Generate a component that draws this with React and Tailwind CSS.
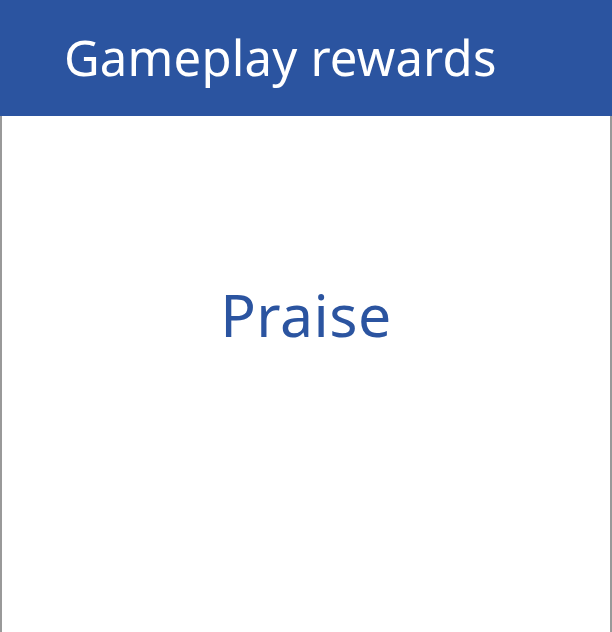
import React from 'react';

export default function App() {
  return (
    <div className="w-[612px] h-[632px] flex flex-col bg-white" style={{ fontFamily: '"Noto Sans", sans-serif' }}>
      <div className="h-[116px] bg-[#2b54a0] flex items-center pl-[64px] pb-[2px] shrink-0">
        <h1 className="text-white text-[49px] leading-none font-normal tracking-[0.2px]">Gameplay rewards</h1>
      </div>
      <div className="flex-1 border-x-2 border-[#999999] flex justify-center pt-[169px]">
        <p className="text-[#2b54a0] text-[59px] leading-none h-fit tracking-[0.5px]">Praise</p>
      </div>
    </div>
  );
}
